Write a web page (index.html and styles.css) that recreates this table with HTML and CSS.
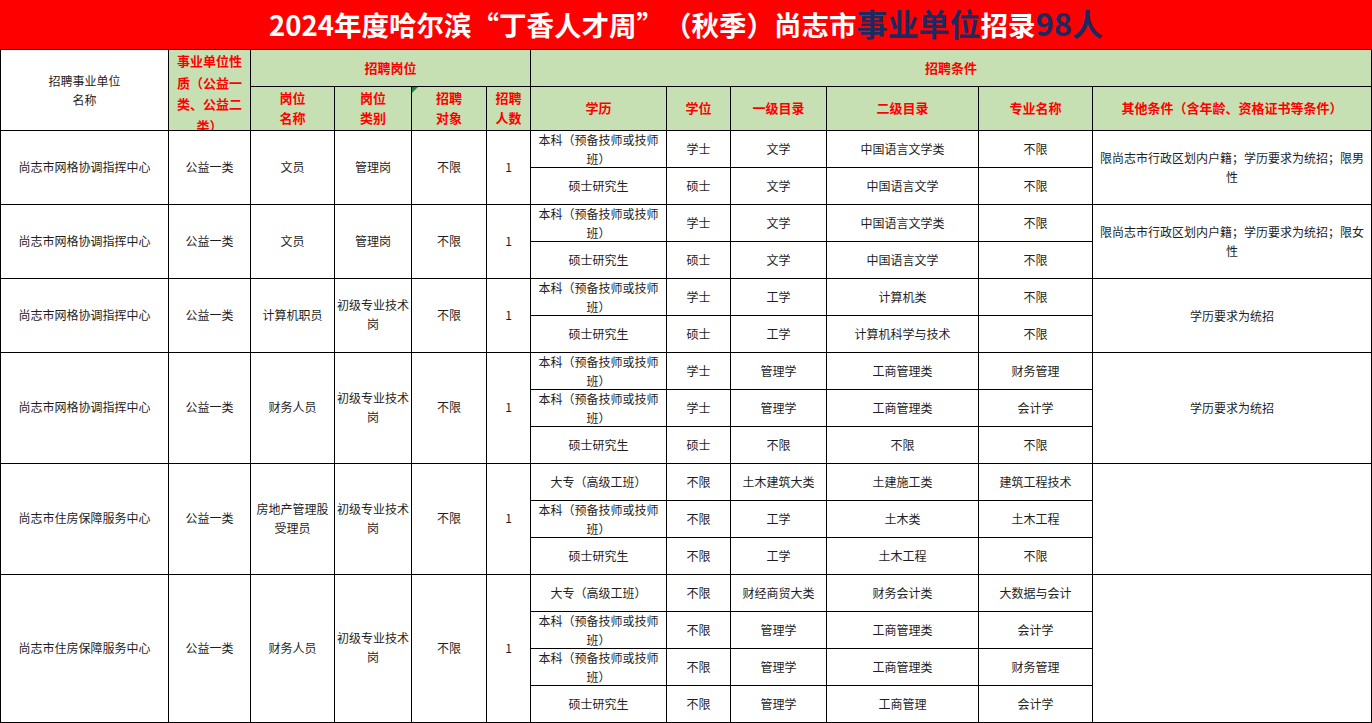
FILE: index.html
```html
<!DOCTYPE html>
<html lang="zh-CN">
<head>
<meta charset="utf-8">
<title>2024年度哈尔滨“丁香人才周”（秋季）尚志市事业单位招录98人</title>
<link rel="stylesheet" href="styles.css">
</head>
<body>
<div class="title">2024年度哈尔滨“丁香人才周”（秋季）尚志市<span class="hl">事业单位</span>招录<span class="hl">98人</span></div>
<div class="sheet">
  <div class="c h-plain rs2">招聘事业单位<br>名称</div>
  <div class="c h rs2 top nature">事业单位性质（公益一类、公益二类）</div>
  <div class="c h cs4">招聘岗位</div>
  <div class="c h cs6">招聘条件</div>
  <div class="c h">岗位<br>名称</div>
  <div class="c h">岗位<br>类别</div>
  <div class="c h note">招聘<br>对象</div>
  <div class="c h">招聘<br>人数</div>
  <div class="c h">学历</div>
  <div class="c h">学位</div>
  <div class="c h">一级目录</div>
  <div class="c h">二级目录</div>
  <div class="c h">专业名称</div>
  <div class="c h">其他条件（含年龄、资格证书等条件）</div>

  <!-- group 1 -->
  <div class="c rs2 grp">尚志市网格协调指挥中心</div>
  <div class="c rs2 grp">公益一类</div>
  <div class="c rs2 grp">文员</div>
  <div class="c rs2 grp">管理岗</div>
  <div class="c rs2 grp">不限</div>
  <div class="c rs2 grp">1</div>
  <div class="c edu">本科（预备技师或技师班）</div>
  <div class="c">学士</div>
  <div class="c">文学</div>
  <div class="c">中国语言文学类</div>
  <div class="c">不限</div>
  <div class="c rs2 other">限尚志市行政区划内户籍；学历要求为统招；限男性</div>
  <div class="c edu">硕士研究生</div>
  <div class="c">硕士</div>
  <div class="c">文学</div>
  <div class="c">中国语言文学</div>
  <div class="c">不限</div>

  <!-- group 2 -->
  <div class="c rs2 grp">尚志市网格协调指挥中心</div>
  <div class="c rs2 grp">公益一类</div>
  <div class="c rs2 grp">文员</div>
  <div class="c rs2 grp">管理岗</div>
  <div class="c rs2 grp">不限</div>
  <div class="c rs2 grp">1</div>
  <div class="c edu">本科（预备技师或技师班）</div>
  <div class="c">学士</div>
  <div class="c">文学</div>
  <div class="c">中国语言文学类</div>
  <div class="c">不限</div>
  <div class="c rs2 other">限尚志市行政区划内户籍；学历要求为统招；限女性</div>
  <div class="c edu">硕士研究生</div>
  <div class="c">硕士</div>
  <div class="c">文学</div>
  <div class="c">中国语言文学</div>
  <div class="c">不限</div>

  <!-- group 3 -->
  <div class="c rs2 grp">尚志市网格协调指挥中心</div>
  <div class="c rs2 grp">公益一类</div>
  <div class="c rs2 grp">计算机职员</div>
  <div class="c rs2 grp">初级专业技术岗</div>
  <div class="c rs2 grp">不限</div>
  <div class="c rs2 grp">1</div>
  <div class="c edu">本科（预备技师或技师班）</div>
  <div class="c">学士</div>
  <div class="c">工学</div>
  <div class="c">计算机类</div>
  <div class="c">不限</div>
  <div class="c rs2 other">学历要求为统招</div>
  <div class="c edu">硕士研究生</div>
  <div class="c">硕士</div>
  <div class="c">工学</div>
  <div class="c">计算机科学与技术</div>
  <div class="c">不限</div>

  <!-- group 4 -->
  <div class="c rs3 grp">尚志市网格协调指挥中心</div>
  <div class="c rs3 grp">公益一类</div>
  <div class="c rs3 grp">财务人员</div>
  <div class="c rs3 grp">初级专业技术岗</div>
  <div class="c rs3 grp">不限</div>
  <div class="c rs3 grp">1</div>
  <div class="c edu">本科（预备技师或技师班）</div>
  <div class="c">学士</div>
  <div class="c">管理学</div>
  <div class="c">工商管理类</div>
  <div class="c">财务管理</div>
  <div class="c rs3 other">学历要求为统招</div>
  <div class="c edu">本科（预备技师或技师班）</div>
  <div class="c">学士</div>
  <div class="c">管理学</div>
  <div class="c">工商管理类</div>
  <div class="c">会计学</div>
  <div class="c edu">硕士研究生</div>
  <div class="c">硕士</div>
  <div class="c">不限</div>
  <div class="c">不限</div>
  <div class="c">不限</div>

  <!-- group 5 -->
  <div class="c rs3 grp">尚志市住房保障服务中心</div>
  <div class="c rs3 grp">公益一类</div>
  <div class="c rs3 grp">房地产管理股受理员</div>
  <div class="c rs3 grp">初级专业技术岗</div>
  <div class="c rs3 grp">不限</div>
  <div class="c rs3 grp">1</div>
  <div class="c edu">大专（高级工班）</div>
  <div class="c">不限</div>
  <div class="c">土木建筑大类</div>
  <div class="c">土建施工类</div>
  <div class="c">建筑工程技术</div>
  <div class="c rs3 other"></div>
  <div class="c edu">本科（预备技师或技师班）</div>
  <div class="c">不限</div>
  <div class="c">工学</div>
  <div class="c">土木类</div>
  <div class="c">土木工程</div>
  <div class="c edu">硕士研究生</div>
  <div class="c">不限</div>
  <div class="c">工学</div>
  <div class="c">土木工程</div>
  <div class="c">不限</div>

  <!-- group 6 -->
  <div class="c rs4 grp">尚志市住房保障服务中心</div>
  <div class="c rs4 grp">公益一类</div>
  <div class="c rs4 grp">财务人员</div>
  <div class="c rs4 grp">初级专业技术岗</div>
  <div class="c rs4 grp">不限</div>
  <div class="c rs4 grp">1</div>
  <div class="c edu">大专（高级工班）</div>
  <div class="c">不限</div>
  <div class="c">财经商贸大类</div>
  <div class="c">财务会计类</div>
  <div class="c">大数据与会计</div>
  <div class="c rs4 other"></div>
  <div class="c edu">本科（预备技师或技师班）</div>
  <div class="c">不限</div>
  <div class="c">管理学</div>
  <div class="c">工商管理类</div>
  <div class="c">会计学</div>
  <div class="c edu">本科（预备技师或技师班）</div>
  <div class="c">不限</div>
  <div class="c">管理学</div>
  <div class="c">工商管理类</div>
  <div class="c">财务管理</div>
  <div class="c edu">硕士研究生</div>
  <div class="c">不限</div>
  <div class="c">管理学</div>
  <div class="c">工商管理</div>
  <div class="c">会计学</div>
</div>
</body>
</html>
```
FILE: styles.css
```css
* { box-sizing: border-box; }
html, body {
  margin: 0;
  padding: 0;
  background: #ffffff;
}
body {
  width: 1372px;
  font-family: "Noto Sans CJK SC", "Noto Sans", "Liberation Sans", sans-serif;
  text-spacing-trim: space-all;
}
.title {
  height: 49px;
  background: #ff0000;
  color: #ffffff;
  font-weight: 700;
  font-size: 27.5px;
  line-height: 46px;
  text-align: center;
  white-space: nowrap;
  text-spacing-trim: space-all;
}
.title .hl {
  color: #1c2a62;
  font-size: 31px;
}
.sheet {
  display: grid;
  grid-template-columns: 167px 81px 83px 76px 74px 43px 135px 63px 95px 151px 113px 278px;
  grid-template-rows: 36px 43px repeat(16, 36px);
  gap: 1px;
  padding: 1px;
  background: #000000;
  width: 1372px;
}
.c {
  background: #ffffff;
  color: #1e1e1e;
  font-size: 12px;
  line-height: 19px;
  display: flex;
  align-items: center;
  justify-content: center;
  text-align: center;
  padding: 0 1px 1px;
  overflow: hidden;
  text-spacing-trim: space-all;
}
.grp { padding-bottom: 3px; }
.h {
  background: #c6e0b4;
  color: #ff0000;
  font-weight: 700;
  font-size: 13px;
  line-height: 20px;
}
.h-plain {
  font-size: 12px;
  line-height: 19px;
}
.top {
  align-items: flex-start;
}
.nature {
  padding: 0 4px;
  line-height: 21.5px;
}
.note {
  position: relative;
}
.note::before {
  content: "";
  position: absolute;
  left: 0;
  top: 0;
  width: 0;
  height: 0;
  border-top: 6px solid #1b8a3a;
  border-right: 6px solid transparent;
}
.edu { padding: 0 4px 1px; }
.other { padding: 0 4px 1px; }
.rs2 { grid-row: span 2; }
.rs3 { grid-row: span 3; }
.rs4 { grid-row: span 4; }
.cs4 { grid-column: span 4; }
.cs6 { grid-column: span 6; }
```
